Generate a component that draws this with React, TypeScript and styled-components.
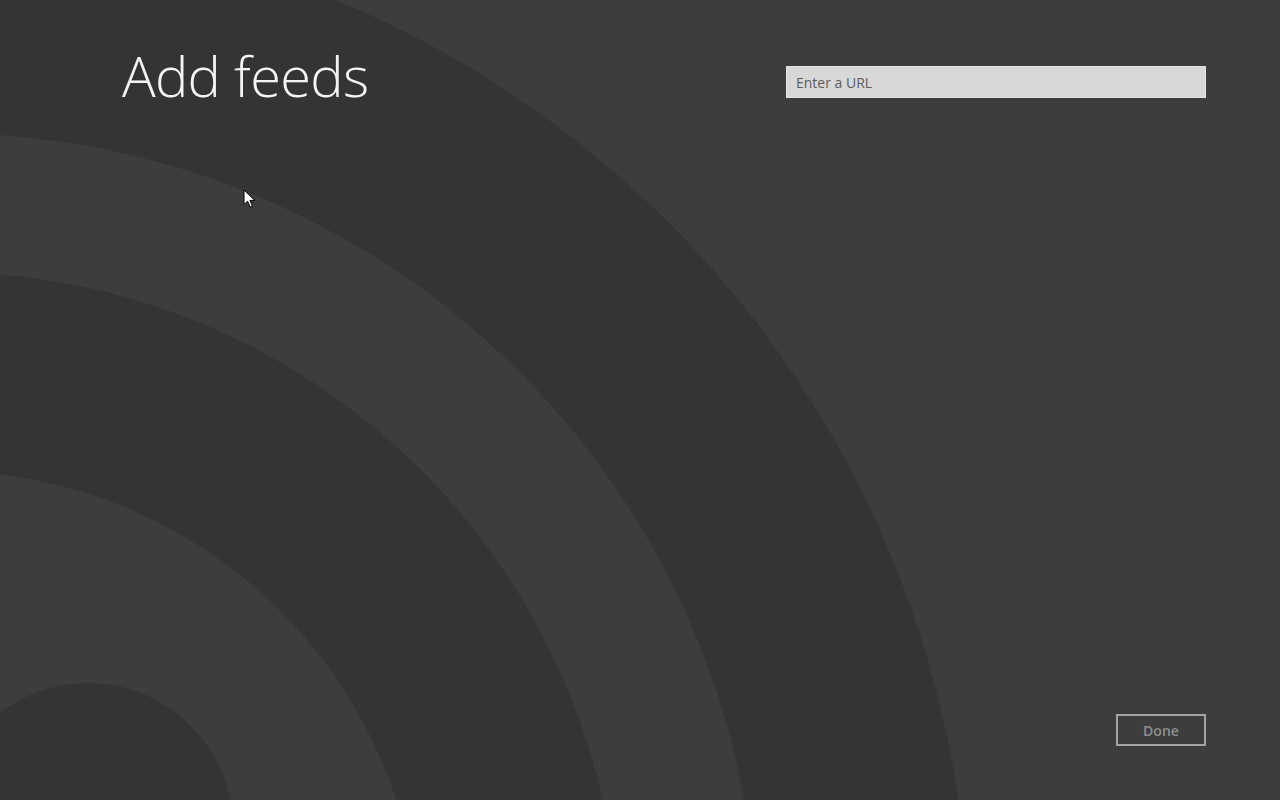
import styled, { createGlobalStyle } from "styled-components"

const GlobalStyle = createGlobalStyle`
  html, body {
    margin: 0;
    padding: 0;
    background: #3d3d3d;
  }
  * {
    box-sizing: border-box;
  }
`

const DARK = "#343434"
const LIGHT = "#3d3d3d"

// rss style arcs behind everything, centre sits off the bottom-left corner
function FeedArt() {
  const cx = -57
  const cy = 948
  return (
    <Art width="1280" height="800" viewBox="0 0 1280 800">
      <circle cx={cx} cy={cy} r={1026} fill={DARK} />
      <circle cx={cx} cy={cy} r={815} fill={LIGHT} />
      <circle cx={cx} cy={cy} r={676} fill={DARK} />
      <circle cx={cx} cy={cy} r={477} fill={LIGHT} />
      <circle cx={88} cy={828} r={145} fill={DARK} />
    </Art>
  )
}

function Pointer() {
  return (
    <Cursor width="14" height="20" viewBox="0 0 14 20">
      <path
        d="M1 1 L1 15.5 L4.6 12.2 L7.2 18 L9.4 17 L6.9 11.4 L11.8 11.4 Z"
        fill="#ffffff"
        stroke="#000000"
        strokeWidth="1"
        strokeLinejoin="round"
      />
    </Cursor>
  )
}

export default function App() {
  return (
    <>
      <GlobalStyle />
      <Screen>
        <FeedArt />
        <Content>
          <Header>
            <Title>Add feeds</Title>
            <UrlInput placeholder="Enter a URL" />
          </Header>
          <Footer>
            <DoneButton>Done</DoneButton>
          </Footer>
        </Content>
        <Pointer />
      </Screen>
    </>
  )
}

const Screen = styled.div`
  position: relative;
  width: 1280px;
  height: 800px;
  overflow: hidden;
  background: ${LIGHT};
  font-family: "Open Sans", "Noto Sans", sans-serif;
`

const Art = styled.svg`
  position: absolute;
  left: 0;
  top: 0;
  display: block;
`

const Cursor = styled.svg`
  position: absolute;
  left: 243px;
  top: 189px;
`

const Content = styled.div`
  position: relative;
  height: 100%;
  display: flex;
  flex-direction: column;
  justify-content: space-between;
  padding: 0 74px 54px 122px;
`

const Header = styled.div`
  display: flex;
  justify-content: space-between;
  align-items: flex-start;
  padding-top: 43px;
`

const Title = styled.h1`
  margin: 0;
  font-size: 56px;
  line-height: 64px;
  font-weight: 300;
  color: #f4f4f4;
  letter-spacing: -0.7px;
`

const UrlInput = styled.input`
  margin-top: 23px;
  width: 420px;
  height: 32px;
  padding: 0 9px;
  border: 1px solid #e2e2e2;
  background: #d8d8d8;
  font-family: "Open Sans", "Noto Sans", sans-serif;
  font-size: 14px;
  color: #333333;
  outline: none;
  &::placeholder {
    color: #5c5c5c;
  }
`

const Footer = styled.div`
  display: flex;
  justify-content: flex-end;
`

const DoneButton = styled.button`
  width: 90px;
  height: 32px;
  border: 2px solid #a4a4a4;
  background: transparent;
  color: #8e8e8e;
  font-family: "Open Sans", "Noto Sans", sans-serif;
  font-size: 14px;
  font-weight: 600;
  padding: 0;
  cursor: default;
`
